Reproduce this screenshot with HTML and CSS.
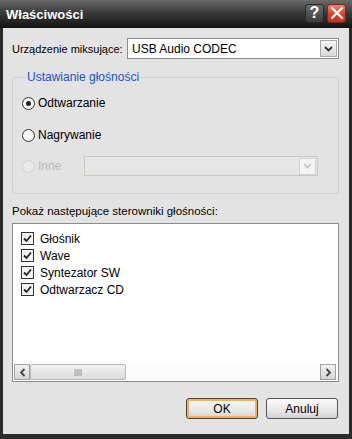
FILE: index.html
```html
<!DOCTYPE html>
<html lang="pl">
<head>
  <meta charset="UTF-8">
  <title>Właściwości</title>
  <link rel="stylesheet" href="styles.css">
</head>
<body>
  <div class="window">
    <div class="titlebar">
      <span class="title">Właściwości</span>
      <span class="tb-btn help">?</span>
      <span class="tb-btn close">
        <svg width="14" height="14" viewBox="0 0 14 14"><path d="M2 2 L12 12 M12 2 L2 12" stroke="#fff" stroke-width="2.4" stroke-linecap="round"/></svg>
      </span>
    </div>

    <div class="content">
      <div class="row mixer">
        <span class="lbl">Urządzenie miksujące:</span>
        <div class="combo">
          <span class="combo-text">USB Audio CODEC</span>
          <span class="combo-btn">
            <svg width="9" height="6" viewBox="0 0 9 6"><path d="M1 1 L4.5 4.5 L8 1" fill="none" stroke="#333" stroke-width="1.8"/></svg>
          </span>
        </div>
      </div>

      <fieldset class="group">
        <legend>Ustawianie głośności</legend>
        <div class="radio-row">
          <span class="radio checked"></span><span>Odtwarzanie</span>
        </div>
        <div class="radio-row">
          <span class="radio"></span><span>Nagrywanie</span>
        </div>
        <div class="radio-row disabled">
          <span class="radio"></span><span class="other-lbl">Inne</span>
          <div class="combo combo-off">
            <span class="combo-text"></span>
            <span class="combo-btn">
              <svg width="9" height="6" viewBox="0 0 9 6"><path d="M1 1 L4.5 4.5 L8 1" fill="none" stroke="#c4c4c4" stroke-width="1.6"/></svg>
            </span>
          </div>
        </div>
      </fieldset>

      <div class="list-lbl">Pokaż następujące sterowniki głośności:</div>
      <div class="listbox">
        <ul class="items">
          <li><span class="check"></span>Głośnik</li>
          <li><span class="check"></span>Wave</li>
          <li><span class="check"></span>Syntezator SW</li>
          <li><span class="check"></span>Odtwarzacz CD</li>
        </ul>
        <div class="hscroll">
          <span class="sb-btn">
            <svg width="7" height="9" viewBox="0 0 7 9"><path d="M5.5 1 L2 4.5 L5.5 8" fill="none" stroke="#444" stroke-width="1.8"/></svg>
          </span>
          <span class="sb-thumb">
            <svg width="9" height="7" viewBox="0 0 9 7"><path d="M1 0V7M3 0V7M5 0V7M7 0V7" stroke="#999" stroke-width="1"/></svg>
          </span>
          <span class="sb-track"></span>
          <span class="sb-btn">
            <svg width="7" height="9" viewBox="0 0 7 9"><path d="M1.5 1 L5 4.5 L1.5 8" fill="none" stroke="#444" stroke-width="1.8"/></svg>
          </span>
        </div>
      </div>

      <div class="actions">
        <button class="btn default">OK</button>
        <button class="btn">Anuluj</button>
      </div>
    </div>
  </div>
</body>
</html>
```

FILE: styles.css
```css
* {
  box-sizing: border-box;
}
body {
  margin: 0;
  background: #1e1e1e;
  font-family: "Liberation Sans", Arial, sans-serif;
  font-size: 11px;
  color: #000;
}
.window {
  width: 352px;
  height: 439px;
  background: #e3e3e3;
  border-left: 3px solid #2a2a2a;
  border-right: 3px solid #2a2a2a;
  border-bottom: 5px solid #2a2a2a;
  display: flex;
  flex-direction: column;
}
.titlebar {
  height: 28px;
  margin: 0 -3px;
  background: linear-gradient(#6a6a6a, #3a3a3a 45%, #141414);
  display: flex;
  align-items: center;
  padding: 0 6px 0 6px;
}
.title {
  flex: 1;
  color: #fff;
  font-weight: bold;
  font-size: 13px;
  padding-top: 1px;
}
.tb-btn {
  width: 19px;
  height: 19px;
  border-radius: 3px;
  display: flex;
  align-items: center;
  justify-content: center;
  margin-top: -2px;
}
.help {
  background: linear-gradient(#6b6b6b, #3c3c3c);
  border: 1px solid #2a2a2a;
  color: #fff;
  font-weight: bold;
  font-size: 16px;
  margin-right: 3px;
}
.close {
  background: linear-gradient(#f0806a, #d8402a 55%, #c8301c);
  border: 1px solid #7a2a1a;
}
.content {
  flex: 1;
  padding: 10px 10px 0 9px;
  display: flex;
  flex-direction: column;
}
.row {
  display: flex;
  align-items: center;
}
.mixer .lbl {
  width: 115px;
  flex-shrink: 0;
  white-space: nowrap;
}
.combo {
  flex: 1;
  height: 21px;
  background: #fff;
  border: 1px solid #7f9db9;
  display: flex;
  align-items: center;
  padding: 1px;
  font-size: 12px;
}
.mixer .combo {
  border-color: #8a8a8a;
}
.combo-text {
  flex: 1;
  padding-left: 3px;
}
.combo-btn {
  width: 17px;
  height: 17px;
  background: linear-gradient(#f4f4f4, #d8d8d8);
  border: 1px solid #a8a8a8;
  display: flex;
  align-items: center;
  justify-content: center;
}
.group {
  margin: 11px 0 0 0;
  padding: 9px 10px 17px 9px;
  border: 1px solid #d0d0cc;
  border-radius: 3px;
}
.group legend {
  color: #2050d0;
  padding: 0 1px;
  margin-left: 4px;
  font-size: 12px;
}
.radio-row {
  display: flex;
  align-items: center;
  height: 20px;
  margin-bottom: 11px;
  font-size: 12px;
}
.radio-row:first-of-type {
  margin-bottom: 12px;
}
.radio-row:last-child {
  margin-bottom: 0;
}
.radio {
  width: 13px;
  height: 13px;
  border-radius: 50%;
  border: 1px solid #333;
  background: #f6f6f6;
  margin-right: 3px;
  display: flex;
  align-items: center;
  justify-content: center;
}
.radio.checked::after {
  content: "";
  width: 5px;
  height: 5px;
  border-radius: 50%;
  background: #222;
}
.disabled {
  color: #b8b8b8;
}
.disabled .radio {
  border-color: #d0d0d0;
  background: #eaeaea;
}
.other-lbl {
  width: 46px;
}
.combo-off {
  height: 20px;
  background: #e6e6e6;
  border-color: #c9c9bf;
  margin-right: 10px;
}
.combo-off .combo-btn {
  background: #f4f4f4;
  border-color: #d4d4d4;
}
.list-lbl {
  margin-top: 11px;
  font-size: 11.5px;
}
.listbox {
  margin-top: 6px;
  height: 159px;
  background: #fff;
  border: 1px solid #8a8a8a;
  display: flex;
  flex-direction: column;
}
.items {
  list-style: none;
  margin: 0;
  padding: 6px 0 0 8px;
  flex: 1;
  font-size: 12px;
}
.items li {
  height: 17px;
  display: flex;
  align-items: center;
}
.check {
  width: 13px;
  height: 13px;
  border: 1px solid #333;
  background: #f4f4f4 url("data:image/svg+xml,%3Csvg xmlns='http://www.w3.org/2000/svg' width='11' height='11'%3E%3Cpath d='M2 5.5 L4.5 8 L9 2.5' fill='none' stroke='%23222' stroke-width='1.8'/%3E%3C/svg%3E") center no-repeat;
  margin-right: 6px;
}
.hscroll {
  height: 17px;
  display: flex;
  padding: 0 2px 1px 1px;
}
.sb-btn {
  width: 16px;
  height: 16px;
  background: linear-gradient(#f2f2f2, #d6d6d6);
  border: 1px solid #a0a0a0;
  display: flex;
  align-items: center;
  justify-content: center;
}
.sb-thumb {
  width: 96px;
  height: 16px;
  background: linear-gradient(#f2f2f2, #dcdcdc);
  border: 1px solid #b8b8b8;
  border-radius: 2px;
  display: flex;
  align-items: center;
  justify-content: center;
}
.sb-track {
  flex: 1;
  background: #fcfcfc;
}
.actions {
  display: flex;
  justify-content: flex-end;
  gap: 8px;
  margin-top: 16px;
  padding-right: 1px;
}
.btn {
  width: 72px;
  height: 21px;
  font: inherit;
  font-size: 12px;
  background: linear-gradient(#fafafa, #e4e4e4 70%, #d2d2d2);
  border: 1px solid #555;
  border-radius: 3px;
  padding: 0;
}
.btn.default {
  box-shadow: inset 0 0 0 2px #f0b060;
  border-color: #444;
}
```
